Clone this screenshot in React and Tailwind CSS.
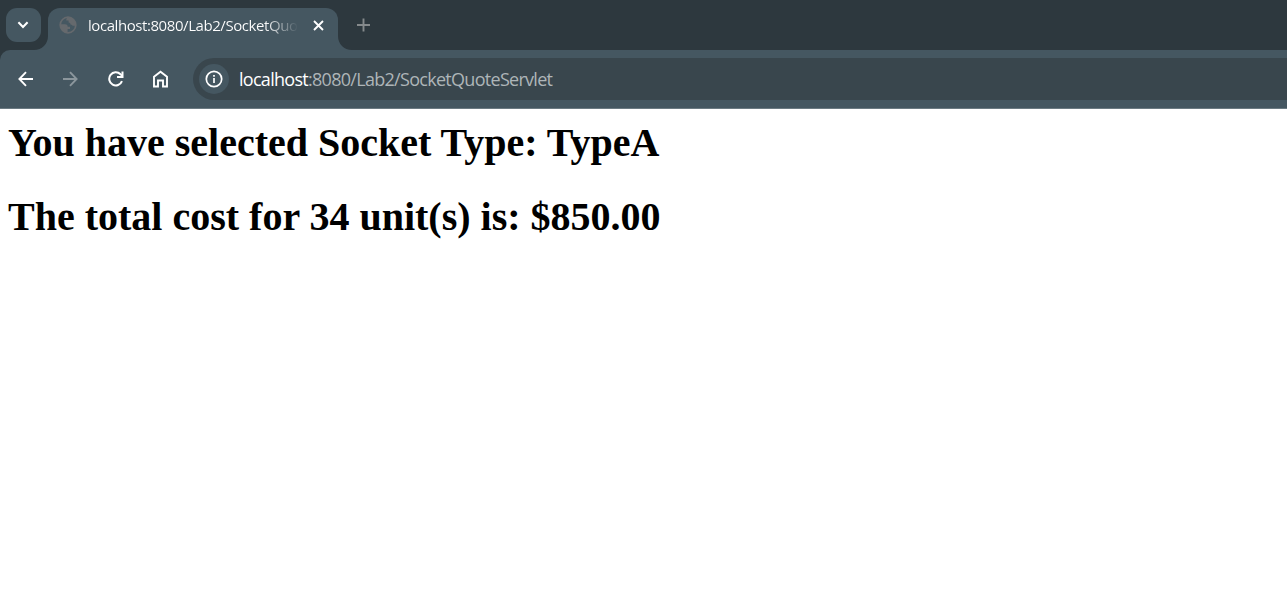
function TabStrip() {
  return (
    <div className="flex h-[50px] bg-[#2d383e]">
      <button aria-label="Search tabs" className="mt-2 ml-1.5 flex h-[34px] w-[35px] shrink-0 items-center justify-center rounded-[11px] bg-[#455761]">
        <svg className="mr-px" width="12" height="8" viewBox="0 0 12 8" fill="none" stroke="#fff" strokeWidth="2.1">
          <path d="M1.4 1.3 6 5.9l4.600-4.600" />
        </svg>
      </button>
      <div className="flex h-full">
        <svg className="-ml-[7px] mt-[36px] h-[14px] w-[14px] shrink-0" viewBox="0 0 14 14" fill="#455761">
          <path d="M14 0C14 8 8 14 0 14H14Z" />
        </svg>
        <div className="mt-2 flex h-[42px] w-[290px] items-start rounded-t-[12px] bg-[#455761]">
          <svg className="mt-2 ml-[11px] h-[18px] w-[18px] shrink-0" viewBox="0 0 18 18">
            <circle cx="9" cy="9" r="7.8" fill="none" stroke="#65696d" strokeWidth="1.7" />
            <path d="M1.5 8.2H6c2 0 2.7 1.1 2.7 2.5H11v2.2H8.6v4C4.5 17 1.2 13.5 1.2 9ZM9.5 1.1c-2 .8-2.3 1.9-2.2 3.3h2.3v2.2c1.4 0 1.7.8 1.9 1.8 1.5.2 2 1.3 2.8 1.3h2.5C16.800 5 13.800 1.200 9.500 1.100Z" fill="#65696d" />
          </svg>
          <div className="ml-[11px] h-[35px] w-[210px] whitespace-nowrap bg-linear-to-r from-white from-84% to-transparent bg-clip-text font-['Open_Sans',sans-serif] text-[15px] leading-[35px] tracking-[-0.43px] text-transparent">
            localhost:8080/Lab2/SocketQuo
          </div>
          <svg className="mt-[12px] ml-[15px] h-[11px] w-[11px] shrink-0" viewBox="0 0 11 11" stroke="#fff" strokeWidth="1.9">
            <path d="m1 1 9 9M10 1 1 10" />
          </svg>
        </div>
        <svg className="mt-[36px] h-[14px] w-[14px] shrink-0" viewBox="0 0 14 14" fill="#455761">
          <path d="M0 0C0 8 6 14 14 14H0Z" />
        </svg>
      </div>
      <svg className="mt-[18px] ml-[4px] h-[14px] w-[14px] shrink-0" viewBox="0 0 14 14" stroke="#858a8c" strokeWidth="1.9">
        <path d="M7.500.5v13M1 7h13" />
      </svg>
    </div>
  );
}

function Toolbar() {
  return (
    <div className="bg-[#2d383e]">
      <div className="flex h-[59px] items-start rounded-tl-[10px] border-b border-[#6b7a82] bg-[#455761]">
        <div className="mt-[21px] ml-[18px] flex w-[175px] shrink-0 items-start">
          <svg className="h-4 w-[15px]" viewBox="0 0 15 16" fill="none" stroke="#fff" strokeWidth="1.9">
            <path d="M15 8H1.500M8 1.200 1.400 8 8 14.800" />
          </svg>
          <svg className="ml-[30px] h-4 w-[15px]" viewBox="0 0 15 16" fill="none" stroke="#8b969c" strokeWidth="1.9">
            <path d="M0 8h13.500M7 1.200 13.600 8 7 14.800" />
          </svg>
          <svg className="ml-[29.500px] h-4 w-4" viewBox="0 0 16 16" fill="none" stroke="#fff" strokeWidth="2">
            <path d="M14 10.200A6.600 6.600 0 1 1 12.500 3.200L14.300 5.200" />
            <path d="M14.500.5v5.500H9" />
          </svg>
          <svg className="-mt-px ml-[28.500px] h-[18px] w-[17px]" viewBox="0 0 17 18" fill="none" stroke="#fff" strokeWidth="1.9">
            <path d="M2 6.800 8.500 1.700 15 6.800V16.500H11V10.500H6V16.500H2Z" />
          </svg>
        </div>
        <div className="mt-2 flex h-[42px] grow items-center rounded-l-full bg-[#39464d]">
          <div className="ml-[6px] flex h-[30px] w-[30px] shrink-0 items-center justify-center rounded-full bg-[#455761]">
            <svg width="18" height="18" viewBox="0 0 18 18" fill="none" stroke="#fff" strokeWidth="1.7">
              <circle cx="9" cy="9" r="7.700" />
              <path d="M9 8v5M9 5v1.800" />
            </svg>
          </div>
          <div className="ml-[10px] whitespace-nowrap font-['Open_Sans',sans-serif] text-[18px] leading-[42px] tracking-[-0.71px] text-[#aeb5b8]">
            <span className="text-white">localhost</span>:8080/Lab2/SocketQuoteServlet
          </div>
        </div>
      </div>
    </div>
  );
}

export default function App() {
  return (
    <div className="flex h-[612px] w-full flex-col overflow-hidden bg-white">
      <TabStrip />
      <Toolbar />
      <main className="flex flex-col gap-[28px] pt-[11px] pl-[8px] font-['Liberation_Serif',serif] text-[40px] leading-[46px] font-bold text-black">
        <h1>You have selected Socket Type: TypeA</h1>
        <h1>The total cost for 34 unit(s) is: $850.00</h1>
      </main>
    </div>
  );
}
